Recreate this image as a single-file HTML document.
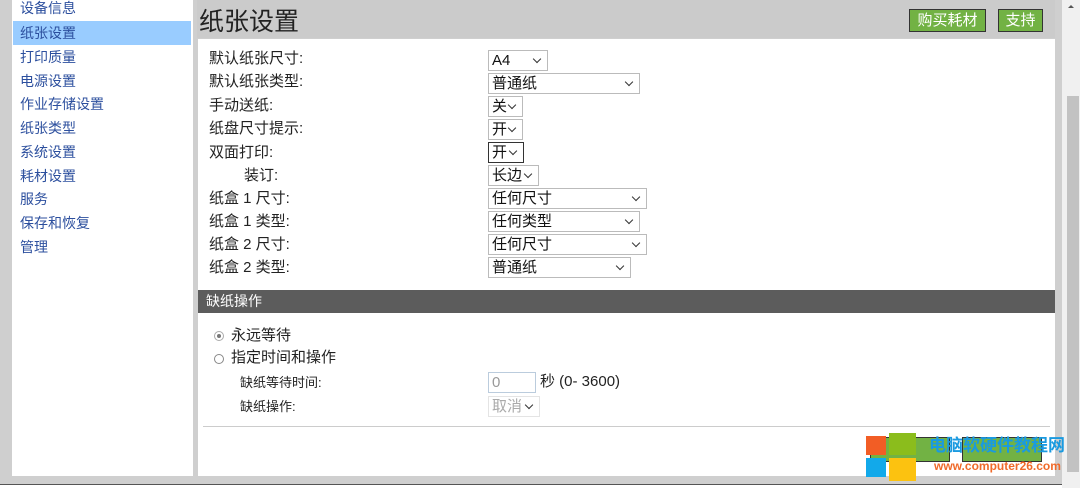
<!DOCTYPE html>
<html><head><meta charset="utf-8"><style>
*{margin:0;padding:0;box-sizing:border-box}
body{width:1080px;height:488px;background:#cfcfcf;position:relative;overflow:hidden;font-family:"Liberation Sans","Noto Sans CJK SC",sans-serif;color:#222}
.a{position:absolute;white-space:nowrap}
#side{left:12px;top:0;width:181px;height:476px;background:#fff}
#side div{position:absolute;left:8px;font-size:14px;color:#2c4f9e;line-height:20px}
#sel{left:1px!important;width:178px;height:24px;background:#99ccff;padding-left:7px}
#main{left:198px;top:39px;width:857px;height:437px;background:#fff}
#hdr{left:197px;top:0;width:858px;height:38px;background:#cbcbcb}
.btn{position:absolute;top:9px;height:23px;background:#72b244;border:1px solid #333;color:#fff;font-size:15px;line-height:21px;text-align:center}
.lb{position:absolute;left:209px;font-size:15px;line-height:20px;color:#222;white-space:nowrap}
.s{position:absolute;left:488px;height:21px;border:1px solid #bbb;background:#fff;font-size:15px;line-height:19px;padding-left:3px;color:#111}
.s:after{content:"";position:absolute;right:7px;top:5px;width:5px;height:5px;border-right:1.3px solid #333;border-bottom:1.3px solid #333;transform:rotate(45deg)}
</style></head><body>
<div id="side" class="a">
<div style="top:-2px">设备信息</div>
<div id="sel" style="top:21px;line-height:24px">纸张设置</div>
<div style="top:47px">打印质量</div>
<div style="top:71px">电源设置</div>
<div style="top:94px">作业存储设置</div>
<div style="top:118px">纸张类型</div>
<div style="top:142px">系统设置</div>
<div style="top:166px">耗材设置</div>
<div style="top:189px">服务</div>
<div style="top:213px">保存和恢复</div>
<div style="top:237px">管理</div>
</div>
<div id="hdr" class="a"><div class="a" style="left:2px;top:2px;font-size:25px;color:#222">纸张设置</div></div>
<div class="btn" style="left:909px;width:77px">购买耗材</div>
<div class="btn" style="left:998px;width:45px">支持</div>
<div id="main" class="a"></div>
<div class="lb" style="top:49px">默认纸张尺寸:</div>
<div class="lb" style="top:72px">默认纸张类型:</div>
<div class="lb" style="top:96px">手动送纸:</div>
<div class="lb" style="top:119px">纸盘尺寸提示:</div>
<div class="lb" style="top:143px">双面打印:</div>
<div class="lb" style="top:166px;left:244px">装订:</div>
<div class="lb" style="top:189px">纸盒 1 尺寸:</div>
<div class="lb" style="top:212px">纸盒 1 类型:</div>
<div class="lb" style="top:235px">纸盒 2 尺寸:</div>
<div class="lb" style="top:258px">纸盒 2 类型:</div>
<div class="s" style="top:50px;width:60px">A4</div>
<div class="s" style="top:73px;width:152px">普通纸</div>
<div class="s" style="top:96px;width:35px">关</div>
<div class="s" style="top:119px;width:35px">开</div>
<div class="s" style="top:142px;width:36px;border:1.5px solid #333">开</div>
<div class="s" style="top:165px;width:51px">长边</div>
<div class="s" style="top:188px;width:159px">任何尺寸</div>
<div class="s" style="top:211px;width:152px">任何类型</div>
<div class="s" style="top:234px;width:159px">任何尺寸</div>
<div class="s" style="top:257px;width:143px">普通纸</div>
<div class="a" style="left:198px;top:290px;width:857px;height:23px;background:#5c5c5c;color:#fff;font-size:14px;line-height:23px;padding-left:8px">缺纸操作</div>
<div class="a" style="left:214px;top:331px;width:10px;height:10px;border:1px solid #aaa;border-radius:50%"><div class="a" style="left:2px;top:2px;width:4px;height:4px;border-radius:50%;background:#777"></div></div>
<div class="lb" style="top:326px;left:231px">永远等待</div>
<div class="a" style="left:214px;top:354px;width:10px;height:10px;border:1px solid #888;border-radius:50%"></div>
<div class="lb" style="top:348px;left:231px">指定时间和操作</div>
<div class="lb" style="top:373px;left:240px;font-size:13px">缺纸等待时间:</div>
<div class="lb" style="top:397px;left:240px;font-size:13px">缺纸操作:</div>
<div class="a" style="left:488px;top:372px;width:48px;height:21px;border:1px solid #bcd;font-size:15px;line-height:19px;padding-left:3px;color:#999">0</div>
<div class="lb" style="top:372px;left:540px">秒 (0- 3600)</div>
<div class="s" style="top:396px;width:52px;color:#aaa;border-color:#e4e4e4">取消</div>
<div class="a" style="left:203px;top:426px;width:847px;height:1px;background:#ccc"></div>
<div class="btn" style="left:870px;top:437px;width:80px;height:25px"></div>
<div class="btn" style="left:962px;top:437px;width:80px;height:25px"></div>
<div class="a" style="left:1055px;top:0;width:7px;height:478px;background:#cfcfcf"></div>
<div class="a" style="left:1062px;top:0;width:18px;height:488px;background:#f0f0f0"></div>
<div class="a" style="left:1067px;top:96px;width:12px;height:376px;background:#c2c2c2"></div>
<div class="a" style="left:1068px;top:5px;width:0;height:0;border-left:3px solid transparent;border-right:3px solid transparent;border-bottom:3px solid #555"></div>
<div class="a" style="left:0;top:484px;width:1062px;height:4px;background:#fff;border-top:1px solid #555"></div>
<div class="a" style="left:866px;top:436px;width:20px;height:19px;background:#f25d25"></div>
<div class="a" style="left:889px;top:433px;width:27px;height:22px;background:#8bbd1c"></div>
<div class="a" style="left:866px;top:458px;width:20px;height:19px;background:#12a9ea"></div>
<div class="a" style="left:889px;top:458px;width:27px;height:23px;background:#fcc210"></div>
<div class="a" style="left:929px;top:435px;font-size:17px;line-height:22px;font-weight:bold;color:#1a9ae0">电脑软硬件教程网</div>
<div class="a" style="left:934px;top:459px;font-size:12px;line-height:14px;font-weight:bold;color:#f06a2a">www.computer26.com</div>
</body></html>
